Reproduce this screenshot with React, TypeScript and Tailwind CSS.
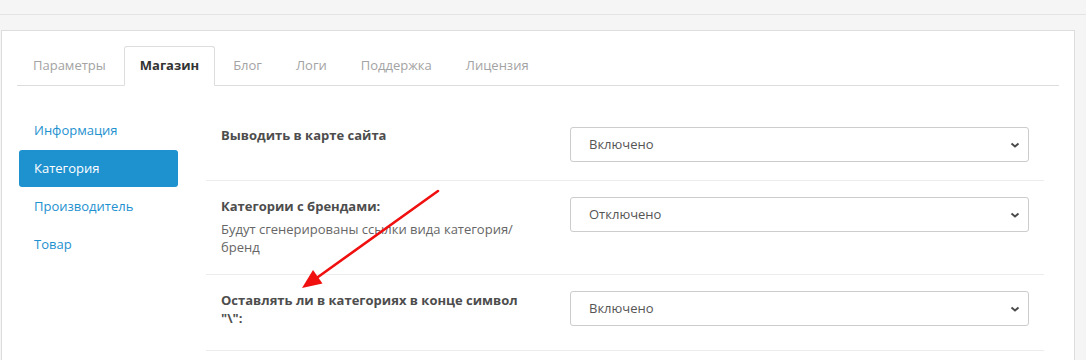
import React from "react";

const tabs = ["Параметры", "Магазин", "Блог", "Логи", "Поддержка", "Лицензия"];
const nav = ["Информация", "Категория", "Производитель", "Товар"];

function Select({ value }: { value: string }) {
  return (
    <div className="flex h-[35px] w-full items-center justify-between rounded-[3px] border border-[#cccccc] bg-white pl-[18px] pr-[7px] text-[13px] text-[#555]">
      <span className="mt-[1px]">{value}</span>
      <svg width="12" height="8" viewBox="0 0 12 8">
        <path d="M2.5 2.5 L6 5.5 L9.5 2.5" fill="none" stroke="#4a4a4a" strokeWidth="1.9" />
      </svg>
    </div>
  );
}

export default function App() {
  return (
    <div className="relative min-h-screen bg-[#f5f5f5] font-['Open_Sans',sans-serif] text-[13px]">
      <div className="h-[15px] border-b border-[#e4e4e4]" />
      <div className="ml-[1px] mt-[15px] w-[1074px] border border-[#dddddd] bg-white px-[15px] pt-[15px] pb-[20px]">
        <ul className="flex border-b border-[#dddddd]">
          {tabs.map((t, i) => (
            <li key={t} className="-mb-px mr-[2px]">
              <div
                className={
                  i === 1
                    ? "flex h-[40px] items-center rounded-t-[3px] border border-[#dddddd] border-b-white bg-white px-[15px] font-bold text-[#333]"
                    : "flex h-[40px] items-center rounded-t-[3px] border border-transparent px-[15px] text-[#a3a3a3]"
                }
              >
                {t}
              </div>
            </li>
          ))}
        </ul>
        <div className="flex">
          <div className="w-[189px] pt-[26px]">
            <div className="ml-[2px] flex w-[159px] flex-col gap-[1px]">
              {nav.map((n, i) => (
                <div
                  key={n}
                  className={
                    i === 1
                      ? "flex h-[37px] items-center rounded-[3px] bg-[#1e91cf] px-[15px] text-white"
                      : "flex h-[37px] items-center rounded-[3px] px-[15px] text-[#1e91cf]"
                  }
                >
                  {n}
                </div>
              ))}
            </div>
          </div>
          <div className="w-[838px] pt-[26px]">
            <div className="flex h-[68px] pt-[15px]">
              <div className="-mt-[1px] w-[349px] px-[15px] font-bold leading-[18px] text-[#4d4d4d]">
                Выводить в карте сайта
              </div>
              <div className="flex-1 px-[15px]">
                <Select value="Включено" />
              </div>
            </div>
            <div className="flex h-[94px] border-t border-[#ececec] pt-[16px]">
              <div className="w-[349px] px-[15px] leading-[18px]">
                <div className="font-bold text-[#4d4d4d]">Категории с брендами:</div>
                <div className="mt-[5px] text-[#666]">
                  Будут сгенерированы ссылки вида категория/ бренд
                </div>
              </div>
              <div className="flex-1 px-[15px]">
                <Select value="Отключено" />
              </div>
            </div>
            <div className="flex h-[76px] border-t border-[#ececec] pt-[16px]">
              <div className="w-[349px] px-[15px] font-bold leading-[18px] text-[#4d4d4d]">
                Оставлять ли в категориях в конце символ "\":
              </div>
              <div className="flex-1 px-[15px]">
                <Select value="Включено" />
              </div>
            </div>
            <div className="h-[40px] border-t border-[#ececec]" />
          </div>
        </div>
      </div>
      <svg
        className="pointer-events-none absolute left-0 top-0"
        width="1086"
        height="360"
        viewBox="0 0 1086 360"
      >
        <line x1="438" y1="191" x2="318" y2="277" stroke="#f01010" strokeWidth="2.6" strokeLinecap="round" />
        <polygon points="302,288 322.5,283.5 313,270" fill="#f01010" />
      </svg>
    </div>
  );
}
